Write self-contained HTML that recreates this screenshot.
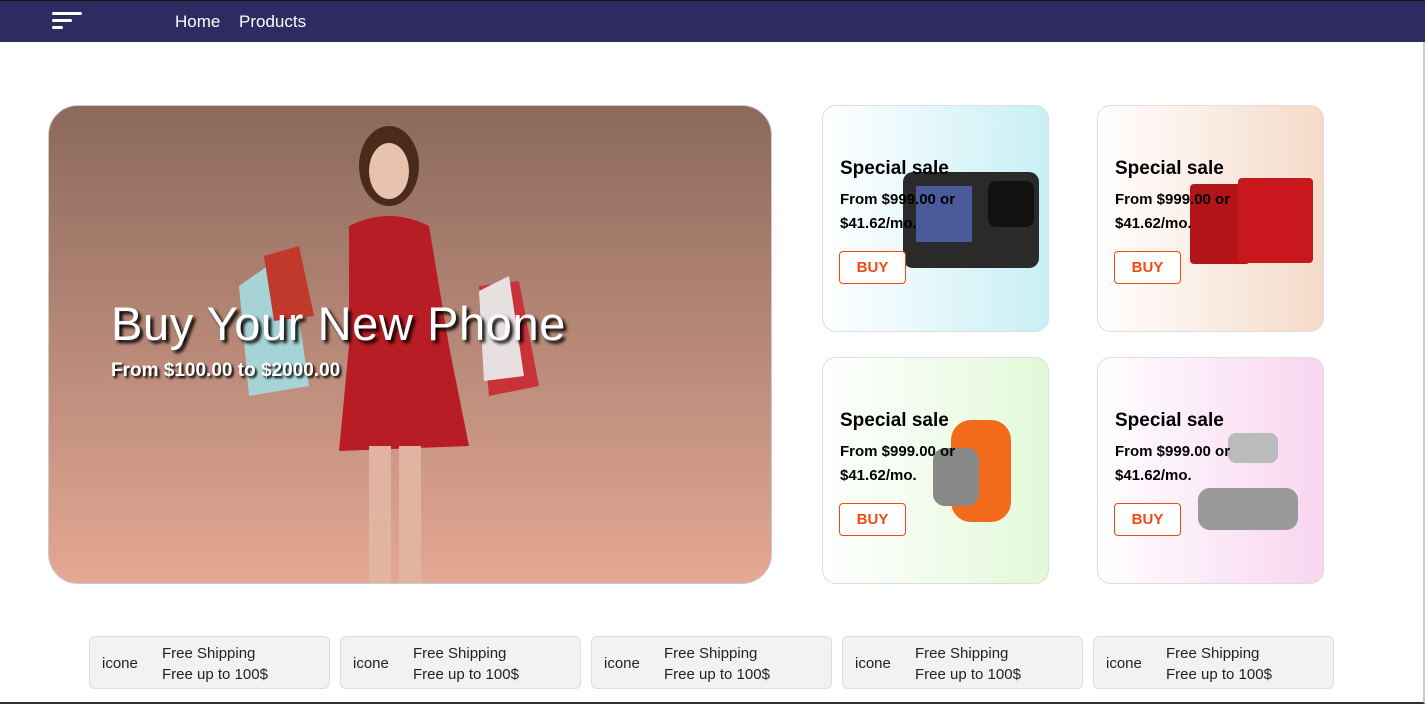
<!DOCTYPE html>
<html><head><style>
*{margin:0;padding:0;box-sizing:border-box}
body{width:1425px;height:704px;overflow:hidden;background:#fff;font-family:"Liberation Sans","DejaVu Sans",sans-serif;position:relative;border-right:2px solid #ccc;border-bottom:2px solid #333}
.nav{position:absolute;left:0;top:0;width:1425px;height:42px;background:#2e2a62;border-top:1px solid #111}
.nav a{position:absolute;top:11px;color:#fff;font-size:17px;text-decoration:none}
.bar{position:absolute;background:#fff;height:3px;border-radius:2px}
.hero{position:absolute;left:48px;top:105px;width:724px;height:479px;border-radius:30px;background:linear-gradient(#8b695c,#e4a893);overflow:hidden;border:1px solid #ccc}
.hero h1{position:absolute;left:62px;top:190px;color:#fff;font-size:47px;font-weight:normal;letter-spacing:0.6px;text-shadow:3px 3px 3px #000;white-space:nowrap}
.hero p{position:absolute;left:62px;top:254px;color:#fff;font-size:19px;font-weight:bold;text-shadow:2px 2px 2px #000}
.card{position:absolute;width:227px;height:227px;border:1px solid #ddd;border-radius:14px;overflow:hidden}
.card h3{position:absolute;left:17px;top:52px;font-size:19px;font-weight:bold;z-index:2;white-space:nowrap}
.card .t{position:absolute;left:17px;top:82px;font-size:15px;font-weight:bold;line-height:24px;z-index:2}
.card .b{position:absolute;left:16px;top:145px;width:67px;height:33px;border:1px solid #f04a10;border-radius:4px;color:#f04a10;font-weight:bold;font-size:15px;text-align:center;line-height:31px;z-index:2;background:#fff}
.f{position:absolute;top:636px;width:241px;height:53px;background:#f2f2f2;border:1px solid #ddd;border-radius:6px;font-size:15px;color:#222}
.f .i{position:absolute;left:12px;top:18px}
.f .a{position:absolute;left:72px;top:6px;line-height:21px}
</style></head><body>
<div class="nav">
<div class="bar" style="left:52px;top:11px;width:30px"></div>
<div class="bar" style="left:52px;top:18px;width:20px"></div>
<div class="bar" style="left:52px;top:25px;width:11px"></div>
<a style="left:175px">Home</a><a style="left:239px">Products</a>
</div>
<div class="hero">
<svg width="724" height="479" style="position:absolute;left:0;top:0">
<path d="M190 180 L240 145 L260 280 L200 290 Z" fill="#a6d4d6"/>
<path d="M215 150 L250 140 L265 210 L225 215Z" fill="#c0392b"/>
<path d="M430 180 L470 175 L490 280 L440 290Z" fill="#c8333a"/>
<path d="M430 185 L460 170 L475 270 L435 275Z" fill="#e8e0e0"/>
<ellipse cx="340" cy="60" rx="30" ry="40" fill="#4a2a1a"/>
<ellipse cx="340" cy="65" rx="20" ry="28" fill="#e9c2ae"/>
<path d="M300 120 Q340 100 380 120 L400 240 L420 340 L290 345 L300 240Z" fill="#b81c24"/>
<rect x="320" y="340" width="22" height="139" fill="#e0b4a0"/>
<rect x="350" y="340" width="22" height="139" fill="#e0b4a0"/>
</svg>
<h1>Buy Your New Phone</h1>
<p>From $100.00 to $2000.00</p>
</div>
<div class="card" style="left:822px;top:105px;background:linear-gradient(90deg,#fff,#c8eff5)">
<div style="position:absolute;left:80px;top:66px;width:136px;height:96px;background:#2a2a2a;border-radius:10px"></div>
<div style="position:absolute;left:93px;top:80px;width:56px;height:56px;background:#4a5a9a"></div>
<div style="position:absolute;left:165px;top:75px;width:46px;height:46px;background:#111;border-radius:8px"></div>
<h3>Special sale</h3><div class="t">From $999.00 or<br>$41.62/mo.</div><div class="b">BUY</div></div>
<div class="card" style="left:1097px;top:105px;background:linear-gradient(90deg,#fff,#f5dac8)">
<div style="position:absolute;left:92px;top:78px;width:60px;height:80px;background:#b3141a;border-radius:4px"></div>
<div style="position:absolute;left:140px;top:72px;width:75px;height:85px;background:#c8181e;border-radius:4px"></div>
<h3>Special sale</h3><div class="t">From $999.00 or<br>$41.62/mo.</div><div class="b">BUY</div></div>
<div class="card" style="left:822px;top:357px;background:linear-gradient(90deg,#fff,#e2f9d8)">
<div style="position:absolute;left:128px;top:62px;width:60px;height:102px;background:#f26a1b;border-radius:20px"></div>
<div style="position:absolute;left:110px;top:90px;width:46px;height:58px;background:#888;border-radius:12px"></div>
<h3>Special sale</h3><div class="t">From $999.00 or<br>$41.62/mo.</div><div class="b">BUY</div></div>
<div class="card" style="left:1097px;top:357px;background:linear-gradient(90deg,#fff,#f8d5f0)">
<div style="position:absolute;left:130px;top:75px;width:50px;height:30px;background:#bbb;border-radius:8px"></div>
<div style="position:absolute;left:100px;top:130px;width:100px;height:42px;background:#999;border-radius:12px"></div>
<h3>Special sale</h3><div class="t">From $999.00 or<br>$41.62/mo.</div><div class="b">BUY</div></div>
<div class="f" style="left:89px"><span class="i">icone</span><div class="a">Free Shipping<br>Free up to 100$</div></div>
<div class="f" style="left:340px"><span class="i">icone</span><div class="a">Free Shipping<br>Free up to 100$</div></div>
<div class="f" style="left:591px"><span class="i">icone</span><div class="a">Free Shipping<br>Free up to 100$</div></div>
<div class="f" style="left:842px"><span class="i">icone</span><div class="a">Free Shipping<br>Free up to 100$</div></div>
<div class="f" style="left:1093px"><span class="i">icone</span><div class="a">Free Shipping<br>Free up to 100$</div></div>
</body></html>
